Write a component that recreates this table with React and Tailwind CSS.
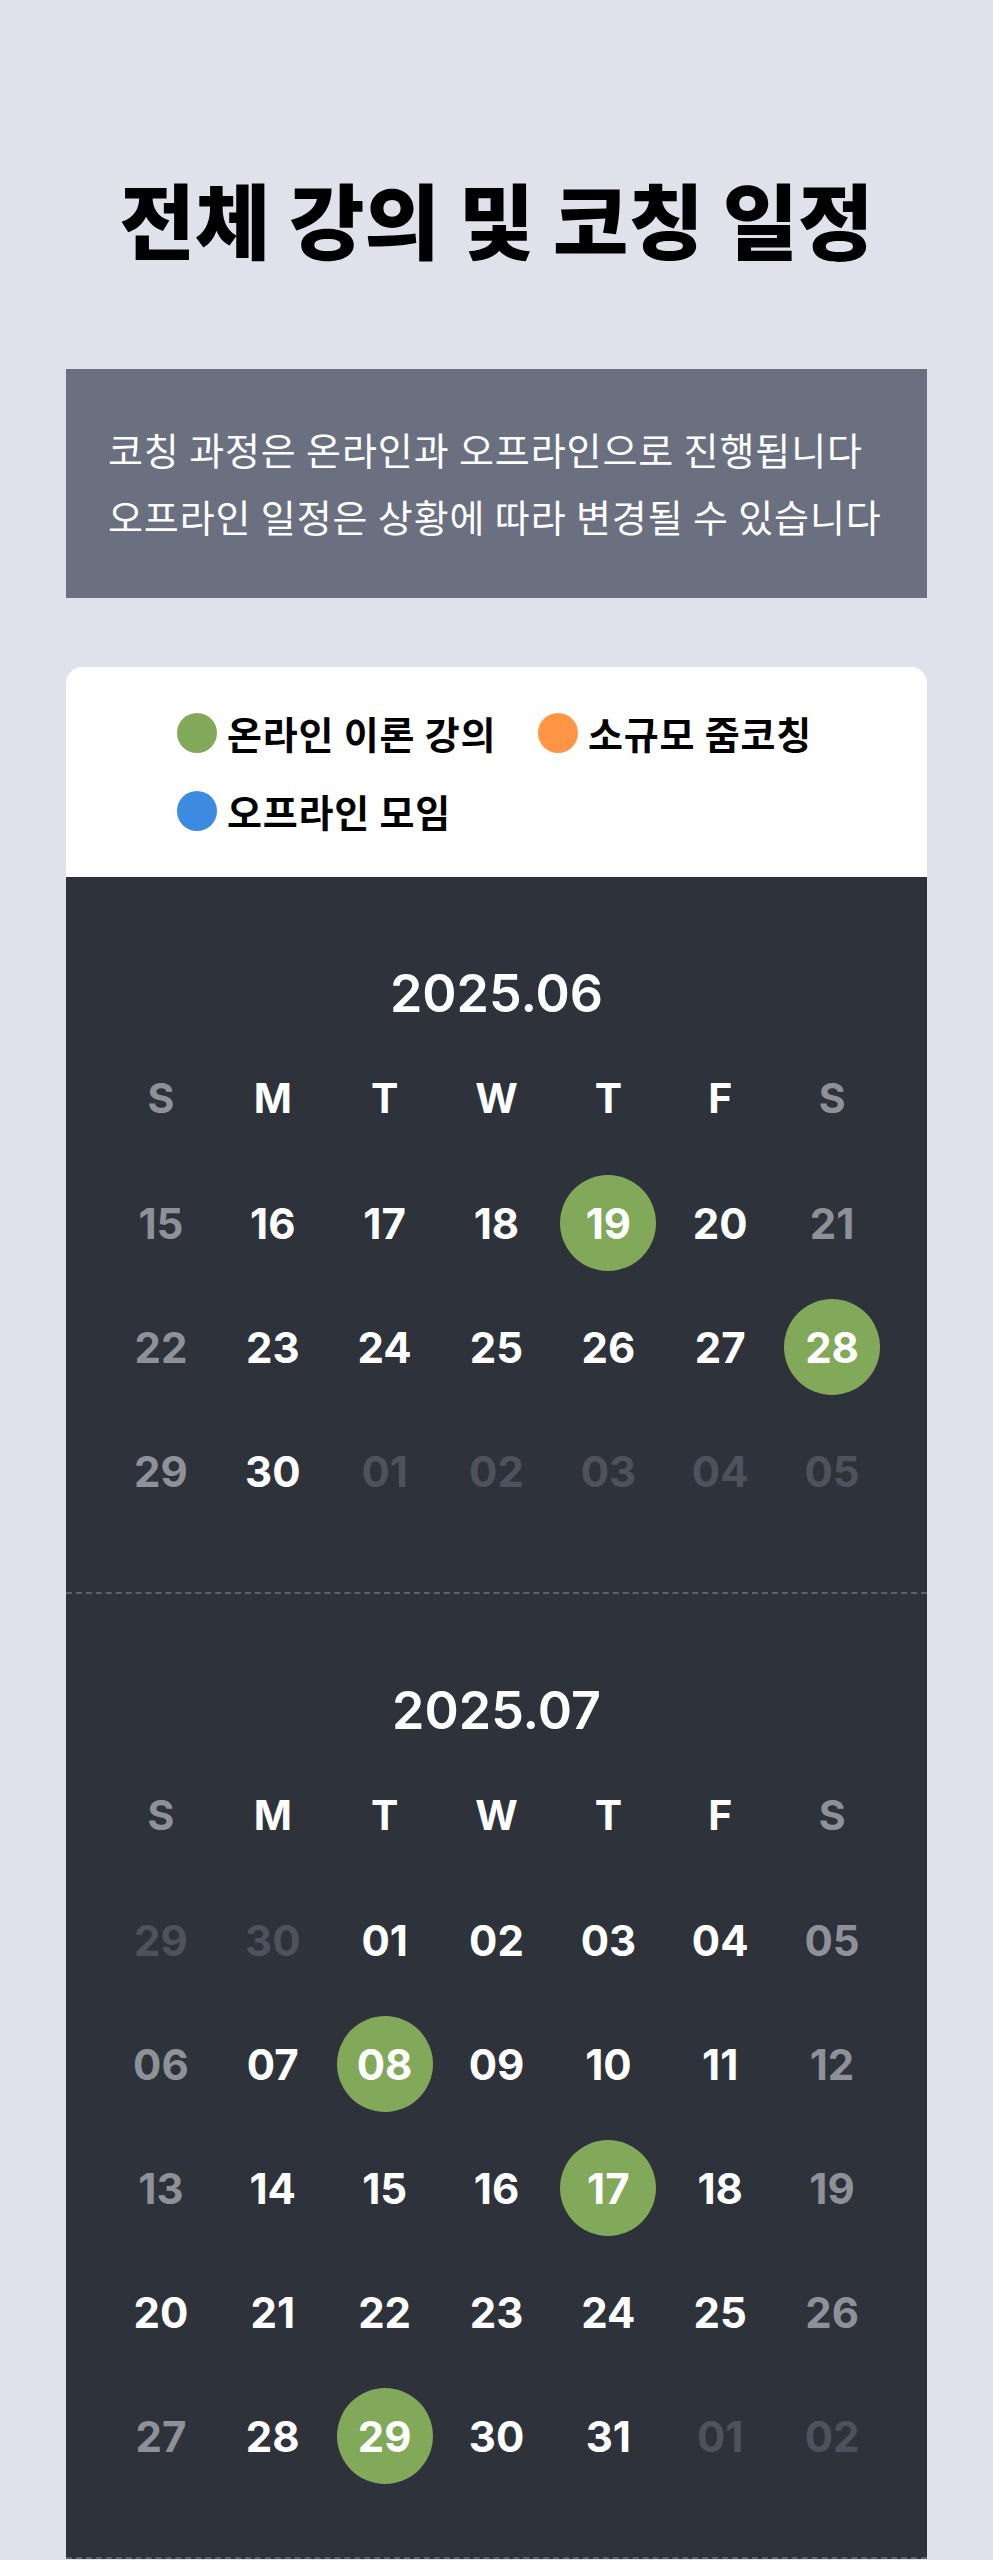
import React from 'react';

const KR = { fontFamily: '"Noto Sans CJK KR", "Noto Sans", sans-serif' };

// day types: w = normal, g = weekend, o = other month, h = class day
const months = [
    {
        title: '2025.06',
        rows: [
            [['15', 'g'], ['16', 'w'], ['17', 'w'], ['18', 'w'], ['19', 'h'], ['20', 'w'], ['21', 'g']],
            [['22', 'g'], ['23', 'w'], ['24', 'w'], ['25', 'w'], ['26', 'w'], ['27', 'w'], ['28', 'h']],
            [['29', 'g'], ['30', 'w'], ['01', 'o'], ['02', 'o'], ['03', 'o'], ['04', 'o'], ['05', 'o']],
        ],
    },
    {
        title: '2025.07',
        rows: [
            [['29', 'o'], ['30', 'o'], ['01', 'w'], ['02', 'w'], ['03', 'w'], ['04', 'w'], ['05', 'g']],
            [['06', 'g'], ['07', 'w'], ['08', 'h'], ['09', 'w'], ['10', 'w'], ['11', 'w'], ['12', 'g']],
            [['13', 'g'], ['14', 'w'], ['15', 'w'], ['16', 'w'], ['17', 'h'], ['18', 'w'], ['19', 'g']],
            [['20', 'w'], ['21', 'w'], ['22', 'w'], ['23', 'w'], ['24', 'w'], ['25', 'w'], ['26', 'g']],
            [['27', 'g'], ['28', 'w'], ['29', 'h'], ['30', 'w'], ['31', 'w'], ['01', 'o'], ['02', 'o']],
        ],
    },
];

const weekdays = ['S', 'M', 'T', 'W', 'T', 'F', 'S'];

const dayColor = {
    w: 'text-white',
    g: 'text-[#8f9199]',
    o: 'text-[#4d525d]',
    h: 'text-white bg-[#82a95a]',
};

const Month = ({ title, rows }) => (
    <div className="pt-[87px] pb-[59px] border-b-2 border-dashed border-[#5c616c]">
        <h2 className="h-[60px] leading-[60px] text-center text-white text-[52px] font-semibold mb-[13px]">{title}</h2>
        <div className="grid grid-cols-7 px-[39px] h-[124px] items-center">
            {weekdays.map((d, i) => (
                <div
                    key={i}
                    className={`text-center text-[41px] font-bold ${i === 0 || i === 6 ? 'text-[#8f9199]' : 'text-white'}`}
                >
                    {d}
                </div>
            ))}
        </div>
        {rows.map((row, r) => (
            <div key={r} className="grid grid-cols-7 px-[39px] h-[124px] items-center">
                {row.map(([num, type], i) => (
                    <div key={i} className="flex justify-center">
                        <div
                            className={`w-[96px] h-[96px] rounded-full flex items-center justify-center text-[42px] font-bold ${dayColor[type]}`}
                        >
                            {num}
                        </div>
                    </div>
                ))}
            </div>
        ))}
    </div>
);

const LegendItem = ({ color, label }) => (
    <div className="flex items-center h-[44px]">
        <span className={`w-[40px] h-[40px] rounded-full shrink-0 ${color}`} />
        <span className="ml-[10px] text-[38px] font-bold tracking-[0.8px] text-black leading-none" style={KR}>
            {label}
        </span>
    </div>
);

export default function App() {
    return (
        <div className="min-h-screen bg-[#dfe2ea] px-[66px] pt-[176px]" style={{ fontFamily: 'Inter, "Noto Sans CJK KR", sans-serif' }}>
            {/* Title */}
            <h1 className="text-center text-[82px] font-black leading-[84px] text-black" style={KR}>
                전체 강의 및 코칭 일정
            </h1>

            {/* Notice box */}
            <div className="mt-[109px] bg-[#6a7080] pl-[42px] pt-[46px] pb-[49px] text-white text-[38px] tracking-[0.9px] leading-[67px]" style={KR}>
                <p>코칭 과정은 온라인과 오프라인으로 진행됩니다</p>
                <p>오프라인 일정은 상황에 따라 변경될 수 있습니다</p>
            </div>

            {/* Calendar card */}
            <div className="mt-[69px] rounded-t-[16px] overflow-hidden">
                {/* Legend */}
                <div className="bg-white pl-[111px] py-[44px]">
                    <div className="grid grid-cols-[361px_auto] gap-y-[34px]">
                        <LegendItem color="bg-[#82a95a]" label="온라인 이론 강의" />
                        <LegendItem color="bg-[#ff9646]" label="소규모 줌코칭" />
                        <LegendItem color="bg-[#3d8be0]" label="오프라인 모임" />
                    </div>
                </div>

                {/* Months */}
                <div className="bg-[#2e323b]">
                    {months.map((m) => (
                        <Month key={m.title} title={m.title} rows={m.rows} />
                    ))}
                </div>
            </div>
        </div>
    );
}
